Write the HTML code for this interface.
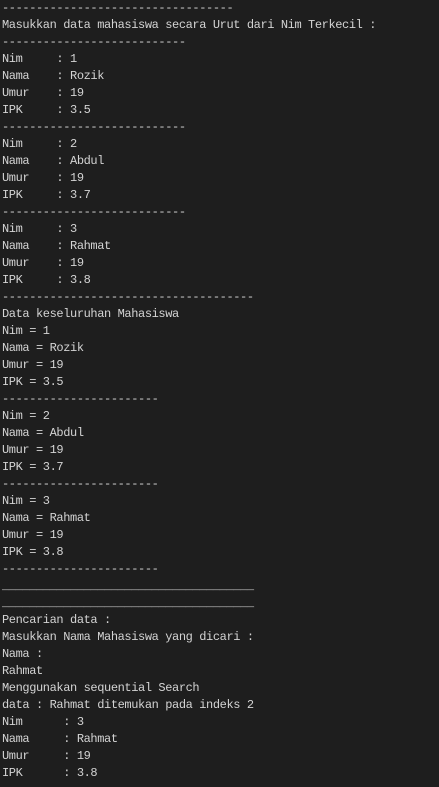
<!DOCTYPE html><html><head><style>
html,body{margin:0;background:#1e1e1e;width:439px;height:787px;overflow:hidden}
pre{margin:0;position:absolute;top:0px;left:2px;font-family:"Liberation Mono",monospace;font-size:12px;letter-spacing:-0.4px;line-height:17px;color:#d4d4d4}
</style></head><body><pre>----------------------------------
Masukkan data mahasiswa secara Urut dari Nim Terkecil :
---------------------------
Nim     : 1
Nama    : Rozik
Umur    : 19
IPK     : 3.5
---------------------------
Nim     : 2
Nama    : Abdul
Umur    : 19
IPK     : 3.7
---------------------------
Nim     : 3
Nama    : Rahmat
Umur    : 19
IPK     : 3.8
-------------------------------------
Data keseluruhan Mahasiswa
Nim = 1
Nama = Rozik
Umur = 19
IPK = 3.5
-----------------------
Nim = 2
Nama = Abdul
Umur = 19
IPK = 3.7
-----------------------
Nim = 3
Nama = Rahmat
Umur = 19
IPK = 3.8
-----------------------
_____________________________________
_____________________________________
Pencarian data :
Masukkan Nama Mahasiswa yang dicari :
Nama :
Rahmat
Menggunakan sequential Search
data : Rahmat ditemukan pada indeks 2
Nim      : 3
Nama     : Rahmat
Umur     : 19
IPK      : 3.8
</pre></body></html>
